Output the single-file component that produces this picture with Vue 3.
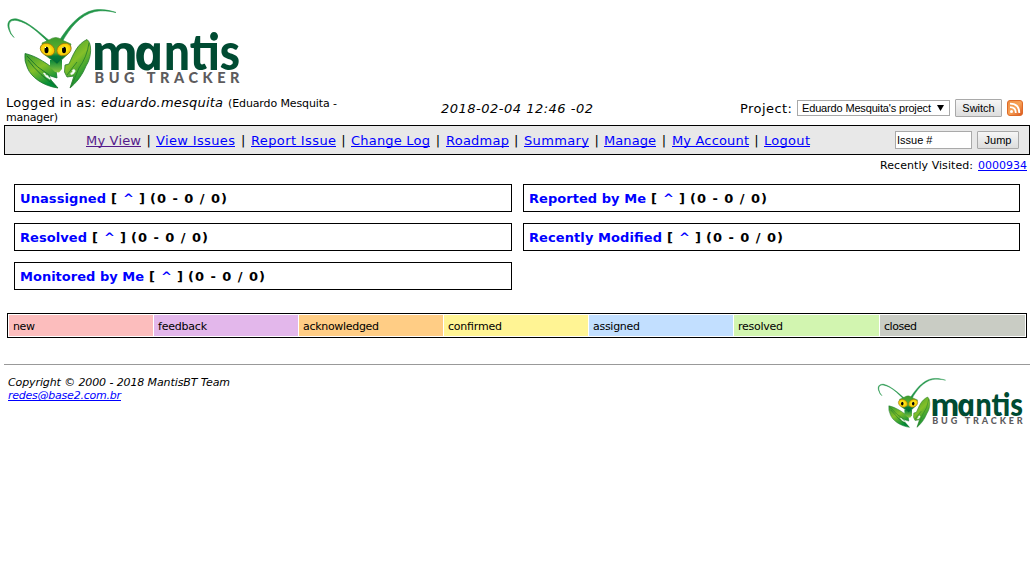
<script setup>
import { h } from 'vue'

const links = [
  ['My View', 55], ['View Issues', 79], ['Report Issue', 85], ['Change Log', 79], ['Roadmap', 63],
  ['Summary', 65], ['Manage', 52], ['My Account', 77], ['Logout', 46],
]
const boxes = [
  ['Unassigned', 86], ['Reported by Me', 117], ['Resolved', 67], ['Recently Modified', 133], ['Monitored by Me', 124],
]
const statuses = [
  { name: 'new', color: '#fcbdbd', width: 22 },
  { name: 'feedback', color: '#e3b7eb', width: 49 },
  { name: 'acknowledged', color: '#ffcd85', width: 76 },
  { name: 'confirmed', color: '#fff494', width: 54 },
  { name: 'assigned', color: '#c2dfff', width: 47 },
  { name: 'resolved', color: '#d2f5b0', width: 45 },
  { name: 'closed', color: '#c9ccc4', width: 33 },
]

const Run = (props) => {
  const s = props.size || 13
  return h('svg', { width: props.w, height: s + 4, class: 'run', style: { verticalAlign: '-4px', overflow: 'visible' } }, [
    h('text', { x: 0, y: s, textLength: props.w, lengthAdjust: 'spacing', fill: 'currentColor', 'font-size': s }, props.t),
  ])
}
Run.props = ['t', 'w', 'size']

const Logo = () => h('svg', { viewBox: '6 9 234 80', class: 'logo', role: 'img', innerHTML: `
<defs>
<linearGradient id="leaf" x1="0" y1="0" x2=".5" y2="1"><stop offset="0" stop-color="#369b32"/><stop offset=".5" stop-color="#84bf29"/><stop offset="1" stop-color="#008c38"/></linearGradient>
<linearGradient id="face" x1="0" y1="0" x2="0" y2="1"><stop offset="0" stop-color="#3d9a2d"/><stop offset=".55" stop-color="#5eb52d"/><stop offset=".7" stop-color="#087c38"/><stop offset="1" stop-color="#006b35"/></linearGradient>
<linearGradient id="body" x1="0" y1="0" x2="0" y2="1"><stop offset="0" stop-color="#07873b"/><stop offset="1" stop-color="#8dc63f"/></linearGradient>
<radialGradient id="eye"><stop offset=".3" stop-color="#fff21a"/><stop offset="1" stop-color="#f6b900"/></radialGradient>
</defs>
<path d="M51 42C40 33 29 22 17 19C9 18 6 23 9 30Q10 34 14 37.500Q10 33 9.500 29C8 23 10 19.500 17 20.500C28 22.500 39 33 48 42Z" fill="#219548" stroke="#219548" stroke-width=".6"/>
<path d="M59 41C68 27 79 13 94 10C102 9 109 10 116 12.500C109 11 102 10 95 11.500C80 15 70 28 62 42Z" fill="#219548" stroke="#219548" stroke-width=".6"/>
<path d="M25 53.500C37 56 49 65 56 70.500L57 78L49 75.500L51 80L58 88C43 86 31 77 27.500 68Q24 61 25 53.500Z" fill="url(#leaf)" stroke="#17752d" stroke-width=".8"/>
<path d="M27 56Q37 68 49 75M28 60Q40 76 56 86" fill="none" stroke="#126a2b" stroke-width=".8"/>
<path d="M87 39.500C92 43 92 57 86 66C82 76 76 83 70 88L74 76L67 77L64.500 72L65 65L69 64C73 55 77 44 87 39.500Z" fill="url(#leaf)" stroke="#287b2d" stroke-width=".8"/>
<path d="M71 87L79 68Q87 57 89 43M67 75L77 62" fill="none" stroke="#217b2a" stroke-width=".8"/>
<path d="M50 60L62 60L62 69L59 72.500L55 72L50 67Z" fill="url(#body)"/>
<path d="M42 43L49 40Q56 35 62 40L71 44L68 54L57 64L45 55Z" fill="url(#face)" stroke="#358a2d" stroke-width=".6"/>
<ellipse cx="47.500" cy="49.500" rx="7.500" ry="6" transform="rotate(28 47.500 49.500)" fill="url(#eye)" stroke="#8c7b11" stroke-width=".8"/>
<ellipse cx="64" cy="49.500" rx="7.500" ry="6" transform="rotate(-28 64 49.500)" fill="url(#eye)" stroke="#8c7b11" stroke-width=".8"/>
<ellipse cx="46.500" cy="50" rx="2" ry="3.200"/><ellipse cx="64" cy="50" rx="2" ry="3.200"/>
<path d="M45 48l1-1M62.500 48l1-1" stroke="#fff" stroke-width="1"/>
<path d="M43 73l2 0 1 2 2 .5 1 2 2 .5-1 1.500-4-2.500zM74 69l-2 1.500 .5 1.500-2 1 .5 2 2.500-1 2-3z" fill="#fff" stroke="#c9e0c5" stroke-width=".4"/>
<g font-family="Lato" font-weight="900" font-size="52" fill="#004b32">
<text x="92" y="69.500" textLength="45.500" lengthAdjust="spacingAndGlyphs">m</text>
<text transform="translate(136.500 69.500) skewX(12) scale(1.03 1)" font-family="Open Sans" font-weight="700" font-style="italic" font-size="49">a</text>
<text x="164" y="69.500" textLength="76" lengthAdjust="spacingAndGlyphs">ntis</text>
</g>
<text x="94.500" y="82.500" font-family="Lato" font-weight="900" font-size="14.500" fill="#5d5b5d" textLength="145" lengthAdjust="spacing">BUG TRACKER</text>` })
</script>

<template>
  <main class="page">
    <header class="brand"><Logo /></header>
    <section class="info">
      <div class="login"><Run t="Logged in as:" :w="90" /> <i><Run t="eduardo.mesquita" :w="122" /></i> <Run t="(Eduardo Mesquita -" :w="109" :size="11" /><br><Run class="second" t="manager)" :w="52" :size="11" /></div>
      <i class="time"><Run t="2018-02-04 12:46 -02" :w="152" /></i>
      <form class="project" @submit.prevent>
        <Run t="Project:" :w="52" />
        <div class="select"><Run t="Eduardo Mesquita's project" :w="129" :size="11" /><svg width="7" height="6"><path d="M0 0H7L3.500 6Z" /></svg></div>
        <button class="switch">Switch</button>
        <svg class="rss" viewBox="0 0 16 16"><defs><linearGradient id="orange" x2="1" y2="1"><stop stop-color="#ed8d43" /><stop offset=".5" stop-color="#f7a257" /><stop offset="1" stop-color="#d9531c" /></linearGradient></defs><rect x=".5" y=".5" width="15" height="15" rx="2.500" fill="url(#orange)" stroke="#df6a27" /><circle cx="4.500" cy="11.500" r="1.500" fill="#fff" /><path d="M3 7.200Q8.800 7.200 8.800 13M3 3.700Q12.300 3.700 12.300 13" fill="none" stroke="#fff" stroke-width="1.800" /></svg>
      </form>
    </section>
    <nav class="menu">
      <div class="links"><template v-for="(link, i) in links" :key="link[0]"><span v-if="i" class="bar">|</span><a href="#" :class="{ visited: !i }"><Run :t="link[0]" :w="link[1]" /></a></template></div>
      <form class="jump" @submit.prevent><input value="Issue #"><button>Jump</button></form>
    </nav>
    <div class="recent"><Run t="Recently Visited:" :w="93" :size="11" /><a href="#"><Run t="0000934" :w="49" :size="11" /></a></div>
    <section class="boxes">
      <div v-for="box in boxes" :key="box[0]" class="box"><a href="#"><Run :t="box[0]" :w="box[1]" /></a><Run class="count" t="[" :w="6" /><a class="caret" href="#"><Run t="^" :w="11" /></a><Run t="]" :w="6" /><Run class="total" t="(0 - 0 / 0)" :w="77" /></div>
    </section>
    <section class="legend"><div v-for="s in statuses" :key="s.name" :style="{ background: s.color }"><Run :t="s.name" :w="s.width" :size="11" /></div></section>
    <hr>
    <footer>
      <address><Run t="Copyright © 2000 - 2018 MantisBT Team" :w="222" :size="11" /><a href="#"><Run t="redes@base2.com.br" :w="113" :size="11" /></a></address>
      <Logo />
    </footer>
  </main>
</template>

<style>
body { margin: 0; background: #fff; }
</style>
<style scoped>
.page { width: 1026px; height: 576px; padding: 0 4px; overflow: hidden; font: 13px "DejaVu Sans", sans-serif; color: #000; }
.brand { height: 94px; padding: 9px 0 0 2px; box-sizing: border-box; }
.brand .logo { width: 234px; height: 80px; display: block; }
.logo { overflow: visible; }
.info { height: 31px; display: grid; grid-template-columns: 342px 342px 342px; align-items: start; }
.login { padding: 0 0 0 2px; line-height: 14px; white-space: nowrap; }
.login :deep(svg) { margin-right: 1px; }
.login :deep(.second) { margin-top: -1px; display: block; }
.time { text-align: center; padding-top: 6px; line-height: 17px; }
.project { display: flex; align-items: center; justify-content: flex-end; padding: 0 7px 0 0; margin: 5px 0 0; }
.project :deep(.run) { flex: none; }
.select { width: 143px; height: 14px; display: flex; align-items: center; border: 1px solid #a9a9a9; margin: 0 5px; padding: 0 4px; white-space: nowrap; font-family: "Liberation Sans", sans-serif; }
.select svg:last-child { margin-left: 6px; }
button { font: 11px "Liberation Sans", sans-serif; color: #000; height: 18px; padding: 0; border: 1px solid #a9a9a9; border-radius: 1px; background: linear-gradient(#f6f6f6, #ddd); }
.switch { width: 47px; }
.rss { width: 16px; height: 16px; margin-left: 5px; }
.menu { height: 30px; box-sizing: border-box; border: 1px solid #000; background: #e8e8e8; display: flex; align-items: center; justify-content: space-between; }
.links { display: flex; align-items: center; padding-left: 81px; }
.bar { width: 15.4px; text-align: center; }
a { color: #00f; text-decoration: underline; }
.links a, .recent a, address a { display: inline-block; position: relative; }
.links a::after, .recent a::after, address a::after { content: ""; position: absolute; left: 0; right: 0; bottom: 2px; border-bottom: 1px solid currentColor; }
.recent a { height: 15px; }
.links a :deep(svg) { display: block; }
.visited { color: #551a8b; }
.jump { display: flex; gap: 5px; margin: 0 10px 0 0; }
input { width: 77px; height: 18px; box-sizing: border-box; padding: 0 1px; border: 1px solid #a9a9a9; font: 11px "Liberation Sans", sans-serif; }
.jump button { width: 42px; }
.recent { height: 20px; padding: 3px 3px 0 0; box-sizing: border-box; display: flex; gap: 5px; justify-content: flex-end; }
.recent :deep(svg) { display: block; }
.boxes { display: grid; grid-template-columns: 498px 497px; column-gap: 11px; row-gap: 11px; padding: 9px 10px 0; }
.box { height: 28px; box-sizing: border-box; border: 1px solid #000; padding: 0 5px; display: flex; align-items: center; font-weight: bold; }
.box a { display: flex; text-decoration: none; }
.count { margin-left: 5px; }
.caret { margin: 0 5px 0 6px; }
.total { margin-left: 5px; }
.legend { height: 25px; box-sizing: border-box; border: 1px solid #000; margin: 23px 3px 0 3px; padding: 1px; display: grid; grid-template-columns: repeat(5, 144px) 145px 1fr; gap: 1px; }
.legend > div { padding: 4px 4px 0; }
.legend :deep(svg) { display: block; }
hr { height: 1px; border: 0; background: #999; margin: 26px 0 0; }
footer { display: flex; justify-content: space-between; padding: 12px 7px 0 4px; }
footer .logo { width: 146px; height: 50px; margin-top: 1px; }
address { display: flex; flex-direction: column; align-items: flex-start; margin-top: -2px; }
address :deep(svg) { display: block; }
address a { margin-top: -2px; }
</style>
